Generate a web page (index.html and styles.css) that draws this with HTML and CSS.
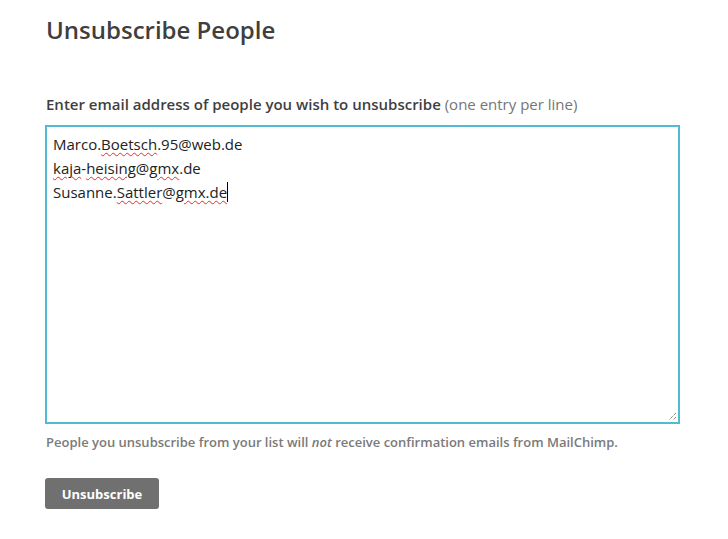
FILE: index.html
```
<!DOCTYPE html>
<html>
<head>
<meta charset="utf-8">
<link rel="stylesheet" href="styles.css">
</head>
<body>
<main class="page">
  <h1 class="title">Unsubscribe People</h1>
  <label class="label">Enter email address of people you wish to unsubscribe <span class="hint">(one entry per line)</span></label>
  <div class="box">
    <div class="line">Marco.<span class="sp">Boetsch</span>.95@web.de</div>
    <div class="line"><span class="sp">kaja</span>-<span class="sp">heising</span>@<span class="sp">gmx</span>.de</div>
    <div class="line">Susanne.<span class="sp">Sattler</span>@<span class="sp">gmx.de</span><span class="caret"></span></div>
    <svg class="grip" width="9" height="9" viewBox="0 0 9 9"><path d="M8 1 L1 8 M8 5 L5 8" stroke="#555" stroke-width="1" stroke-dasharray="1 1" fill="none"/></svg>
  </div>
  <p class="note">People you unsubscribe from your list will <em>not</em> receive confirmation emails from MailChimp.</p>
  <button class="btn">Unsubscribe</button>
</main>
</body>
</html>
```
FILE: styles.css
```
html, body { margin: 0; padding: 0; background: #fff; }
body { font-family: "Open Sans", sans-serif; color: #404040; }
.page { padding: 12px 0 0 45px; width: 635px; display: flex; flex-direction: column; align-items: flex-start; }
.title { font-size: 24px; font-weight: 600; margin: 0 0 0 1px; line-height: 36px; color: #3f3f3f; }
.label { display: block; margin: 45px 0 0 1px; font-size: 15px; font-weight: 600; line-height: 22px; color: #3f3f3f; }
.hint { font-weight: 400; color: #757575; }
.box { position: relative; box-sizing: border-box; width: 635px; height: 299px; margin-top: 10px; border: 2px solid #52bad5; padding: 5px 6px; font-size: 15px; line-height: 24px; color: #222; }
.line { white-space: nowrap; }
.sp { text-decoration: underline wavy #e0302a; text-decoration-thickness: 1px; text-underline-offset: 2px; }
.caret { display: inline-block; width: 1px; height: 20px; background: #000; vertical-align: -4px; }
.grip { position: absolute; right: 1px; bottom: 1px; }
.note { margin: 8px 0 0 1px; font-size: 13px; font-weight: 600; color: #7a7a7a; line-height: 20px; }
.note em { font-style: italic; }
.btn { margin-top: 26px; width: 114px; height: 31px; border: 0; border-radius: 3px; background: #707070; color: #fff; font-family: "Open Sans", sans-serif; font-weight: 700; font-size: 13px; padding: 0; }
```
